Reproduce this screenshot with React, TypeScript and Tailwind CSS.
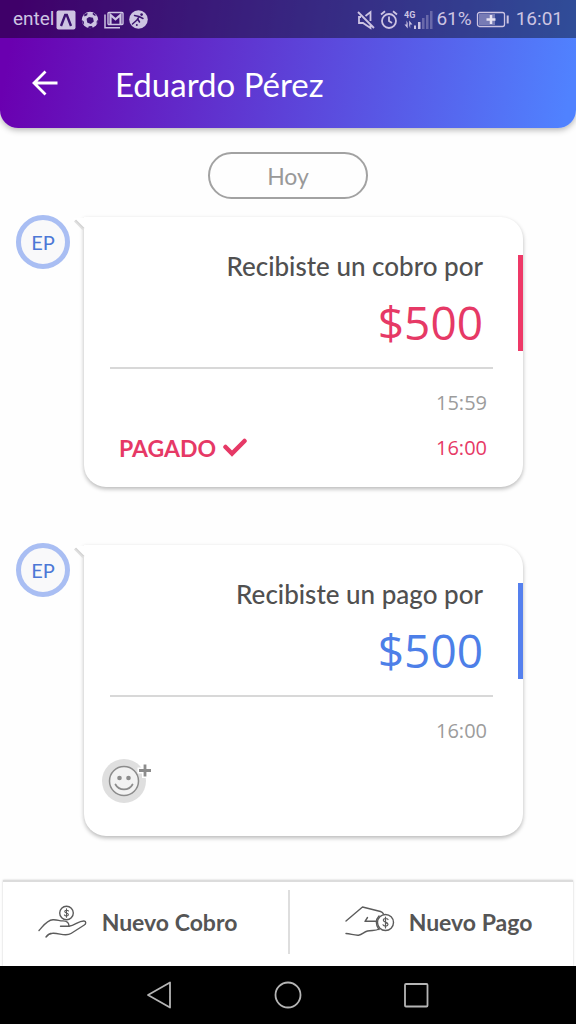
import { ReactNode } from 'react';
import { clsx } from 'clsx';

type Movement = {
  id: number;
  title: string;
  amount: string;
  time: string;
  kind: 'cobro' | 'pago';
  paidAt?: string;
};

const MOVEMENTS: Movement[] = [
  { id: 1, title: 'Recibiste un cobro por', amount: '$500', time: '15:59', kind: 'cobro', paidAt: '16:00' },
  { id: 2, title: 'Recibiste un pago por', amount: '$500', time: '16:00', kind: 'pago' },
];

function StatusBar() {
  return (
    <div className="flex h-[38px] items-center justify-between bg-black/40 pl-[13px] pr-[13px] pt-px font-['Roboto',sans-serif] text-[19px] text-[#cdc4e2]">
      <div className="flex items-center">
        <span>entel</span>
        <svg className="ml-0.5" width="20" height="20" viewBox="0 0 20 20">
          <rect x="0.5" y="0.5" width="19" height="19" rx="2" fill="currentColor" />
          <path d="M5 16 9.2 5h1.6L15 16" fill="none" stroke="#3b1470" strokeWidth="2.4" />
        </svg>
        <svg className="ml-[5px]" width="18" height="18" viewBox="0 0 18 18">
          <circle cx="9" cy="9" r="8.2" fill="currentColor" />
          <g fill="#3b1470">
            <path d="m8 6 4 .8.8 3.600L9.800 13 6.200 11.400 5.600 7.800z" />
            <path d="M3 3.600 6.600 1.800 6.200 4.200 3.400 5.600zM12 1.600l3.200 2.600-1.600.6-2-1.600zM.8 9l2 1.600.4 3L1.600 12zM17 8.400l-1.400 2.200.2 2.600 1-1.400zM7 16.800l.8-1.600 3-.2 1.200 1.400-2.400.8z" />
          </g>
        </svg>
        <svg className="ml-[5px]" width="20" height="18" viewBox="0 0 20 18" fill="none" stroke="currentColor">
          <path d="M1 3.500V16.700H16" strokeWidth="1.500" />
          <rect x="4" y="1.500" width="15" height="12" rx="1" strokeWidth="1.400" />
          <path d="M6.500 13V4l5 4.300 5-4.300v9" strokeWidth="2.200" />
        </svg>
        <svg className="ml-[5px]" width="19" height="19" viewBox="0 0 19 19">
          <circle cx="9.500" cy="9.500" r="9.300" fill="currentColor" />
          <g fill="none" stroke="#3b1470" strokeWidth="1.500" strokeLinecap="round">
            <path d="M5.500 5.500 10 6.500l4 2M10 6.800 8 10M8 10 3.500 14M9 9.500l1.500 2.500" />
          </g>
          <circle cx="12.600" cy="4.600" r="1.300" fill="#3b1470" />
          <circle cx="7.800" cy="15" r="1" fill="#3b1470" />
        </svg>
      </div>

      <div className="flex items-center">
        <svg width="18" height="20" viewBox="0 0 18 20" fill="none" stroke="currentColor" strokeWidth="1.800">
          <path d="M8.500 6 13.500 2v9M4 7H2v6h4l7.500 5v-3.500M1 2l16 16" />
        </svg>
        <svg className="ml-[5px]" width="18" height="20" viewBox="0 0 18 20" fill="none" stroke="currentColor" strokeWidth="1.800">
          <circle cx="9" cy="11" r="7" />
          <path d="M9 6.500V11l3 2M1 4.500 5 1.200M17 4.500 13 1.200" />
        </svg>
        <svg className="ml-1.5" width="30" height="20" viewBox="0 0 30 20">
          <text x="0" y="8" fontSize="9" fontWeight="700" fill="currentColor">4G</text>
          <g fill="currentColor">
            <path d="M2.500 10.500v4H.5l3.200 4V13zM6.200 18.500v-4h2.200l-3.200-4v5z" />
            <rect x="10" y="15.500" width="2" height="3.500" />
            <rect x="14" y="12" width="2.500" height="7" />
            <g opacity="0.350">
              <rect x="18" y="8" width="2.500" height="11" />
              <rect x="22" y="5" width="2.500" height="14" />
              <rect x="26" y="1" width="2.500" height="18" />
            </g>
          </g>
        </svg>
        <span className="ml-0.5">61%</span>
        <svg className="ml-1" width="34" height="18" viewBox="0 0 34 18">
          <rect x="1.500" y="1.500" width="27" height="14" rx="2" fill="none" stroke="currentColor" strokeWidth="1.300" />
          <rect x="3" y="3" width="16" height="11" fill="currentColor" opacity="0.450" />
          <path d="M15 4v9M10.500 8.500h9" stroke="#e6e2f2" strokeWidth="2.500" />
          <path d="M31.700 4.500v8" stroke="currentColor" strokeWidth="2" />
        </svg>
        <span className="ml-1.5">16:01</span>
      </div>
    </div>
  );
}

function Header() {
  return (
    <header className="overflow-hidden rounded-b-[18px] bg-[linear-gradient(100deg,#6a00b0_3%,#5082ff_98%)] shadow-[0_2px_6px_rgba(0,0,0,0.3)]">
      <StatusBar />
      <div className="flex h-[90px] items-center pl-[31px] text-white">
        <button type="button" aria-label="Volver">
          <svg width="28" height="28" viewBox="0 0 28 28" fill="none" stroke="currentColor" strokeWidth="2.800">
            <path d="M26.500 14H3M14.500 2.500 3 14l11.500 11.500" />
          </svg>
        </button>
        <h1 className="ml-14 pt-0.5 text-[33px] leading-10">Eduardo Pérez</h1>
      </div>
    </header>
  );
}

function MovementCard({ movement }: { movement: Movement }) {
  const isCobro = movement.kind === 'cobro';

  return (
    <li className="flex items-start pl-4 pr-[53px]">
      <div className="-mt-0.5 flex size-[54px] shrink-0 items-center justify-center rounded-full border-[5px] border-[#a9bef3] bg-[#f9f9fa] text-[20px] text-[#4d78d6]">
        EP
      </div>

      <article className="relative ml-3.5 flex-1 rounded-[22px] rounded-tl-none bg-white shadow-[0_2px_4px_rgba(0,0,0,0.28)]">
        {/* Bubble tail */}
        <svg className="absolute -left-2.5 top-0" width="12" height="16" viewBox="0 0 12 16">
          <path d="M0 1h12v13z" fill="#fff" />
          <path d="M1 3.500 9.500 12" stroke="#dedede" strokeWidth="3" />
          <path d="M1.500 3 9.500 11" stroke="#cfcfcf" strokeWidth="1" />
        </svg>
        <span className={clsx('absolute right-0 top-[38px] h-24 w-[5px]', isCobro ? 'bg-[#ee3967]' : 'bg-[#5580ee]')} />

        <div className="pr-10 pt-8 text-right">
          <h2 className="text-[26px] leading-[34px] font-medium text-[#505050]">{movement.title}</h2>
          <p
            className={clsx(
              "mt-3 font-['Open_Sans',sans-serif] text-[46px] leading-[54px]",
              isCobro ? 'text-[#e63966]' : 'text-[#4d7fe8]'
            )}
          >
            {movement.amount}
          </p>
        </div>

        <hr className="ml-[26px] mr-[30px] mt-[18px] border-t-2 border-[#d8d8d8]" />

        <div className="pl-[35px] pr-9 pt-5 text-[20px] leading-7">
          <p className="text-right font-['Open_Sans',sans-serif] text-[#9c9c9c]">{movement.time}</p>
          {movement.paidAt && (
            <div className="flex items-center justify-between pb-[25px] pt-[17px] text-[#e63966]">
              <span className="flex items-center gap-[7px] text-[23px] font-bold">
                PAGADO
                <svg width="24" height="20" viewBox="0 0 24 20" fill="none" stroke="currentColor" strokeWidth="4.500">
                  <path d="m2.500 9 6.500 6.500L21.500 3" strokeLinecap="round" />
                </svg>
              </span>
              <span className="font-['Open_Sans',sans-serif]">{movement.paidAt}</span>
            </div>
          )}
        </div>

        {!isCobro && (
          <div className="pb-8 pl-[18px] pt-[13px]">
            <button type="button" aria-label="Agregar reacción" className="block">
              <svg width="52" height="46" viewBox="0 0 52 46" fill="none">
                <circle cx="22" cy="23" r="22" fill="#dfdfdf" />
                <circle cx="22" cy="23" r="14.500" fill="#f2f2f2" stroke="#8c8c8c" strokeWidth="1.500" />
                <circle cx="17.500" cy="20" r="2.300" fill="#8c8c8c" />
                <circle cx="26.500" cy="20" r="2.300" fill="#8c8c8c" />
                <path d="M13.500 26.500c3.500 6.500 13.500 6.500 17 0" stroke="#8c8c8c" strokeWidth="1.800" strokeLinecap="round" />
                <path d="M43 5v15M35.500 12.500h15" stroke="#fff" strokeWidth="6" />
                <path d="M43 6.500v12M37 12.500h12" stroke="#8c8c8c" strokeWidth="2.800" />
              </svg>
            </button>
          </div>
        )}
      </article>
    </li>
  );
}

function HandReceiveIcon() {
  return (
    <svg width="50" height="34" viewBox="0 0 50 34" fill="none" stroke="#5c5c5c" strokeWidth="1.400" strokeLinecap="round" strokeLinejoin="round">
      <circle cx="28.500" cy="8" r="6.800" />
      <path d="M30.500 6c-.6-1-3.600-1.200-3.800.4-.2 1.800 3.900 1.300 3.700 3.300-.2 1.500-3.200 1.600-4 .2M28.500 3.800v8.400" strokeWidth="1.100" />
      <path d="M1 25.500c3.500-3.500 7.500-10.500 14-10.800 5-.2 6 1.300 10 1.200 4.500 0 6 1.500 6 5.300h-8.500" />
      <path d="M31 21.200c6-.5 9.500-5.500 15-5.200 2.500.2 2 3 .3 4L33 28.500c-5.500 3.500-12-.8-18.500-.2C11 28.500 9.500 30 8 32" />
    </svg>
  );
}

function HandPayIcon() {
  return (
    <svg width="50" height="32" viewBox="0 0 50 32" fill="none" stroke="#5c5c5c" strokeWidth="1.400" strokeLinecap="round" strokeLinejoin="round">
      <path d="M34 10c-3.500 3.500-3.500 9 0 13.500" />
      <circle cx="40.500" cy="16.500" r="8" />
      <path d="M43 13.500c-.8-1.300-4.500-1.500-4.700.6-.2 2.200 4.900 1.800 4.700 4.400-.2 2-4 2.200-5 .3M40.500 11v11" strokeWidth="1.200" />
      <path d="M1 15 17.500 1l18 4.500c1.500.5 2.500 1.300 3 2.500M22.500 11.500 20 15.300h12" />
      <path d="M1 27.500c5 .3 8 2 12.500 1.700 4-.5 5-3.200 9-4.200 4.500-1 8.500 0 11.500-2" />
    </svg>
  );
}

function ActionButton({ icon, label, className }: { icon: ReactNode; label: string; className: string }) {
  return (
    <button
      type="button"
      className={clsx('flex flex-1 items-center justify-center gap-3.5 pb-1 text-[23px] font-bold text-[#555]', className)}
    >
      {icon}
      {label}
    </button>
  );
}

function NavigationBar() {
  return (
    <nav className="flex h-[58px] items-center justify-center gap-[101px] bg-black text-[#b5b5b5]">
      <button type="button" aria-label="Atrás">
        <svg width="28" height="28" viewBox="0 0 28 28" fill="none" stroke="currentColor" strokeWidth="1.800" strokeLinejoin="round">
          <path d="M25 1.500v25L3 14z" />
        </svg>
      </button>
      <button type="button" aria-label="Inicio">
        <svg width="28" height="28" viewBox="0 0 28 28" fill="none" stroke="currentColor" strokeWidth="1.800">
          <circle cx="14" cy="14" r="12.500" />
        </svg>
      </button>
      <button type="button" aria-label="Recientes">
        <svg width="28" height="28" viewBox="0 0 28 28" fill="none" stroke="currentColor" strokeWidth="1.800">
          <rect x="2" y="3" width="22.500" height="22.500" rx="1" />
        </svg>
      </button>
    </nav>
  );
}

export default function App() {
  return (
    <div className="flex min-h-screen flex-col bg-[#fefefe] font-['Lato',sans-serif]">
      <Header />

      <main className="flex flex-1 flex-col pt-6">
        <div className="flex h-[47px] w-40 items-center justify-center self-center rounded-full border-2 border-[#a2a2a2] pt-0.5 text-[23px] text-[#999]">
          Hoy
        </div>

        <ul className="mt-[18px] flex flex-col gap-[58px]">
          {MOVEMENTS.map((movement) => (
            <MovementCard key={movement.id} movement={movement} />
          ))}
        </ul>
      </main>

      <footer>
        <div className="mx-[3px] flex h-[86px] border-t-2 border-[#dcdcdc] bg-white shadow-[0_0_2px_rgba(0,0,0,0.2)]">
          <ActionButton icon={<HandReceiveIcon />} label="Nuevo Cobro" className="pr-4" />
          <div className="mb-3 mt-2 w-0.5 bg-[#dedede]" />
          <ActionButton icon={<HandPayIcon />} label="Nuevo Pago" className="pl-3.5" />
        </div>
        <NavigationBar />
      </footer>
    </div>
  );
}
